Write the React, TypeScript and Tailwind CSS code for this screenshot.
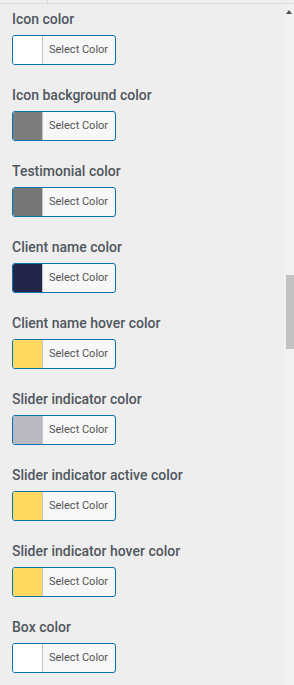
const fields = [
  { label: "Icon color", color: "#ffffff" },
  { label: "Icon background color", color: "#7d7d7d" },
  { label: "Testimonial color", color: "#767676" },
  { label: "Client name color", color: "#23264a" },
  { label: "Client name hover color", color: "#ffd95f" },
  { label: "Slider indicator color", color: "#b9b8c3" },
  { label: "Slider indicator active color", color: "#ffd95f" },
  { label: "Slider indicator hover color", color: "#ffd95f" },
  { label: "Box color", color: "#ffffff" },
];

function ColorField({ label, color }: { label: string; color: string }) {
  return (
    <div className="flex flex-col gap-[6px] mb-[20px]">
      <div className="text-[14px] leading-[20px] font-medium text-[#50575e] whitespace-nowrap">{label}</div>
      <button className="flex w-[104px] h-[30px] rounded-[3px] border border-[#0073aa] overflow-hidden bg-[#f7f7f7] p-0">
        <span className="w-[30px] h-full border-r border-[#c3c4c7]" style={{ backgroundColor: color }} />
        <span className="flex-1 h-full flex items-center pl-[6px] text-[11px] text-[#555]">Select Color</span>
      </button>
    </div>
  );
}

export default function App() {
  return (
    <div className="w-[294px] h-[685px] overflow-hidden bg-[#eeeeee] flex flex-col" style={{ fontFamily: "Roboto, 'Liberation Sans', sans-serif" }}>
      <div className="h-[4px] border-b border-[#dcdcde] flex shrink-0">
        <div className="w-[48px] border-r border-[#dcdcde]" />
      </div>
      <div className="flex flex-1 min-h-0">
        <div className="flex-1 pl-[12px] pt-[5px] overflow-hidden">
          {fields.map((f) => (
            <ColorField key={f.label} {...f} />
          ))}
        </div>
        <div className="w-[10px] bg-[#f1f1f1] flex flex-col items-center relative">
          <svg width="6" height="4" viewBox="0 0 6 4" className="mt-[6px]">
            <polygon points="3,0 6,4 0,4" fill="#505050" />
          </svg>
          <div className="absolute left-[2px] right-0 top-[271px] h-[74px] bg-[#c1c1c1]" />
        </div>
      </div>
    </div>
  );
}
